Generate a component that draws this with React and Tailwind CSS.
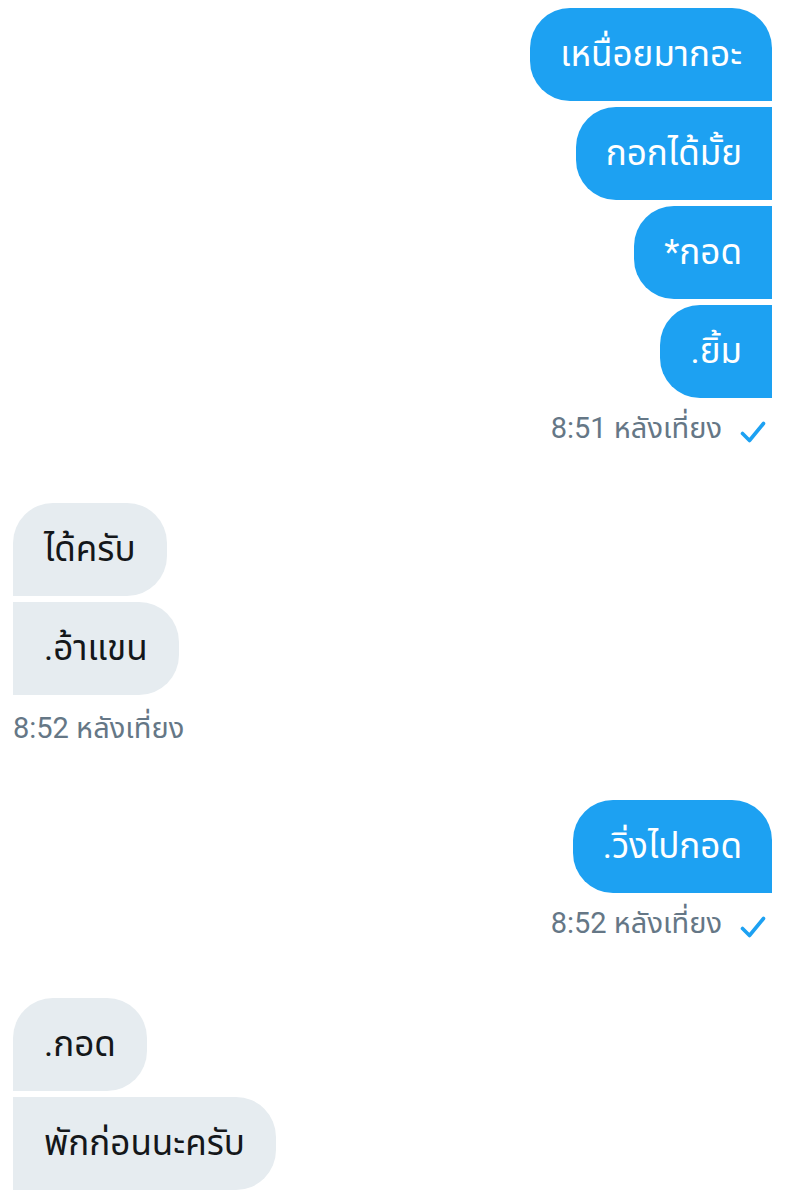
import React from "react";

const FONT = { fontFamily: 'Roboto, "Noto Sans", "Noto Sans Thai", "DejaVu Sans", sans-serif' };

function Check() {
  return (
    <svg width="26" height="26" viewBox="0 0 26 26" className="ml-[18px] mt-[8px]">
      <path d="M2.5 14.5 L9.5 21.5 L23.5 4.5" fill="none" stroke="#1da1f2" strokeWidth="3.6" strokeLinecap="round" strokeLinejoin="round" />
    </svg>
  );
}

function Sent({ text, first }) {
  return (
    <div className="flex justify-end">
      <div
        className={
          "bg-[#1da1f2] text-white text-[35px] leading-[43px] py-[25px] px-[30px] rounded-l-[40px] " +
          (first ? "rounded-tr-[40px]" : "")
        }
      >
        {text}
      </div>
    </div>
  );
}

function Recv({ text, first }) {
  return (
    <div className="flex justify-start">
      <div
        className={
          "bg-[#e6ecf0] text-[#14171a] text-[35px] leading-[43px] py-[25px] px-[31px] rounded-r-[40px] " +
          (first ? "rounded-tl-[40px]" : "")
        }
      >
        {text}
      </div>
    </div>
  );
}

function Stamp({ text, right }) {
  return (
    <div className={"flex items-center h-[36px] " + (right ? "mt-[12px] justify-end pr-[6px]" : "mt-[15px] justify-start")}>
      <span className="text-[29px] leading-[36px] text-[#657786]">{text}</span>
      {right && <Check />}
    </div>
  );
}

export default function App() {
  return (
    <div className="w-[786px] h-[1200px] bg-white overflow-hidden pl-[13px] pr-[14px] pt-[8px]" style={FONT}>
      <div className="flex flex-col gap-[6px]">
        <Sent text="เหนื่อยมากอะ" first />
        <Sent text="กอกได้มั้ย" />
        <Sent text="*กอด" />
        <Sent text=".ยิ้ม" />
      </div>
      <Stamp text="8:51 หลังเที่ยง" right />

      <div className="flex flex-col gap-[6px] mt-[57px]">
        <Recv text="ได้ครับ" first />
        <Recv text=".อ้าแขน" />
      </div>
      <Stamp text="8:52 หลังเที่ยง" />

      <div className="flex flex-col gap-[6px] mt-[54px]">
        <Sent text=".วิ่งไปกอด" first />
      </div>
      <Stamp text="8:52 หลังเที่ยง" right />

      <div className="flex flex-col gap-[6px] mt-[57px]">
        <Recv text=".กอด" first />
        <Recv text="พักก่อนนะครับ" />
      </div>
    </div>
  );
}
